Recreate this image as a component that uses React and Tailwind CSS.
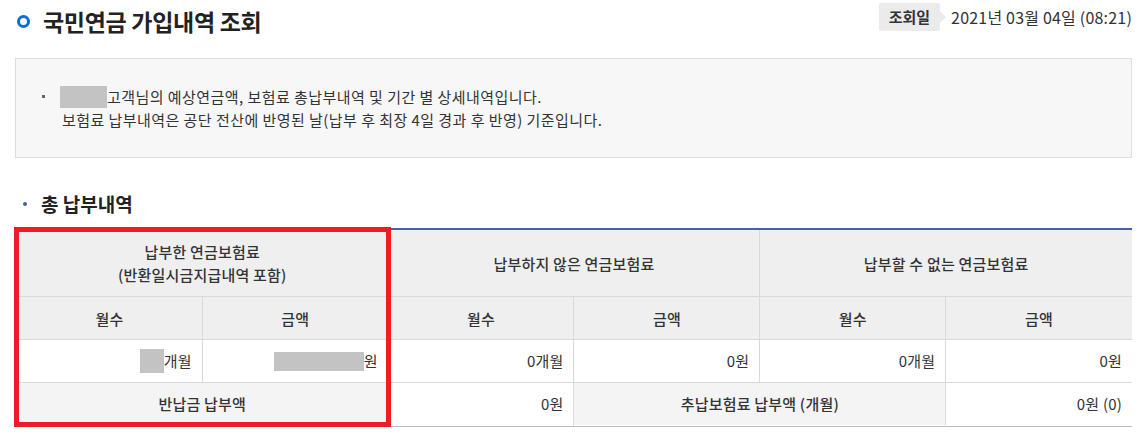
const Redacted = ({ w, h, className = "" }) => (
  <span className={`inline-block bg-[#c3c3c3] align-middle ${className}`} style={{ width: w, height: h }}></span>
);

const Head = ({ children, span = "col-span-1", h = "h-[43px]", last = false }) => (
  <div
    className={`${span} ${h} flex items-center justify-center text-center bg-[#efefef] border-b border-[#d9d9d9] ${
      last ? "" : "border-r"
    } text-[15px] tracking-[0.2px] font-medium text-[#333] leading-[23px]`}
  >
    {children}
  </div>
);

const Cell = ({ children, span = "col-span-1", last = false, bottom = true }) => (
  <div
    className={`${span} h-[43px] flex items-center justify-end pr-[10px] bg-white border-[#d9d9d9] ${
      bottom ? "border-b" : ""
    } ${last ? "" : "border-r"} text-[15px] tracking-[0.2px] text-[#333]`}
  >
    {children}
  </div>
);

const App = () => {
  return (
    <div className="relative w-[1143px] h-[442px] overflow-hidden bg-white font-['Noto_Sans_CJK_KR','Noto_Sans',sans-serif] text-[#333]">
      <div className="ml-[17px] w-[1115px]">
        {/* page title */}
        <div className="flex justify-between">
          <div className="flex items-center h-[42px] gap-[13px]">
            <span className="w-[13px] h-[13px] rounded-full border-[3px] border-[#0b6fc9]"></span>
            <h1 className="text-[23px] font-bold text-[#222] tracking-[-0.3px]">국민연금 가입내역 조회</h1>
          </div>
          <div className="flex items-center h-[28px] mt-[3px]">
            <div className="relative flex items-center h-[28px] px-[10px] bg-[#ebebeb] rounded-[2px] text-[15px] font-bold text-[#333]">
              조회일
              <span className="absolute right-[-6px] top-[8px] w-0 h-0 border-y-[6px] border-y-transparent border-l-[6px] border-l-[#ebebeb]"></span>
            </div>
            <span className="ml-[11px] text-[16px] tracking-[0.2px] text-[#333]">2021년 03월 04일 (08:21)</span>
          </div>
        </div>

        {/* info box */}
        <div className="mt-[16px] -ml-[2px] w-[1117px] h-[100px] border border-[#dddddd] bg-[#f7f7f7] pt-[26px] text-[15px] tracking-[0.45px] text-[#333] leading-[23px]">
          <div className="flex items-center">
            <span className="ml-[26px] w-[3px] h-[3px] bg-[#666]"></span>
            <Redacted w={47} h={22} className="ml-[15px]" />
            <span>고객님의 예상연금액, 보험료 총납부내역 및 기간 별 상세내역입니다.</span>
          </div>
          <p className="pl-[46px]">보험료 납부내역은 공단 전산에 반영된 날(납부 후 최장 4일 경과 후 반영) 기준입니다.</p>
        </div>

        {/* section title */}
        <div className="mt-[34px] flex items-center h-[24px] gap-[14px]">
          <span className="ml-[6px] w-[4px] h-[4px] rounded-full bg-[#4b5cb0]"></span>
          <h2 className="text-[19px] font-bold text-[#222]">총 납부내역</h2>
        </div>

        {/* table */}
        <div className="mt-[12px] grid grid-cols-6 border-t-2 border-t-[#4a5cb3] border-b border-b-[#bbbbbb]">
          <Head span="col-span-2" h="h-[67px]">
            <span>
              납부한 연금보험료
              <br />
              (반환일시금지급내역 포함)
            </span>
          </Head>
          <Head span="col-span-2" h="h-[67px]">납부하지 않은 연금보험료</Head>
          <Head span="col-span-2" h="h-[67px]" last>납부할 수 없는 연금보험료</Head>

          <Head>월수</Head>
          <Head>금액</Head>
          <Head>월수</Head>
          <Head>금액</Head>
          <Head>월수</Head>
          <Head last>금액</Head>

          <Cell>
            <Redacted w={24} h={24} />
            개월
          </Cell>
          <Cell>
            <Redacted w={90} h={19} />
            원
          </Cell>
          <Cell>0개월</Cell>
          <Cell>0원</Cell>
          <Cell>0개월</Cell>
          <Cell last>0원</Cell>

          <div className="col-span-2 h-[42px] flex items-center justify-center bg-[#f4f4f4] border-r border-[#d9d9d9] text-[15px] tracking-[0.2px] font-medium">
            반납금 납부액
          </div>
          <Cell bottom={false}>0원</Cell>
          <div className="col-span-2 h-[42px] flex items-center justify-center bg-[#f4f4f4] border-r border-[#d9d9d9] text-[15px] tracking-[0.2px] font-medium">
            추납보험료 납부액 (개월)
          </div>
          <Cell bottom={false} last>
            0원 (0)
          </Cell>
        </div>
      </div>

      {/* highlight annotation */}
      <div className="absolute left-[14px] top-[227px] w-[377px] h-[200px] border-[5px] border-[#ee1c25] pointer-events-none"></div>
    </div>
  );
};

export default App;
